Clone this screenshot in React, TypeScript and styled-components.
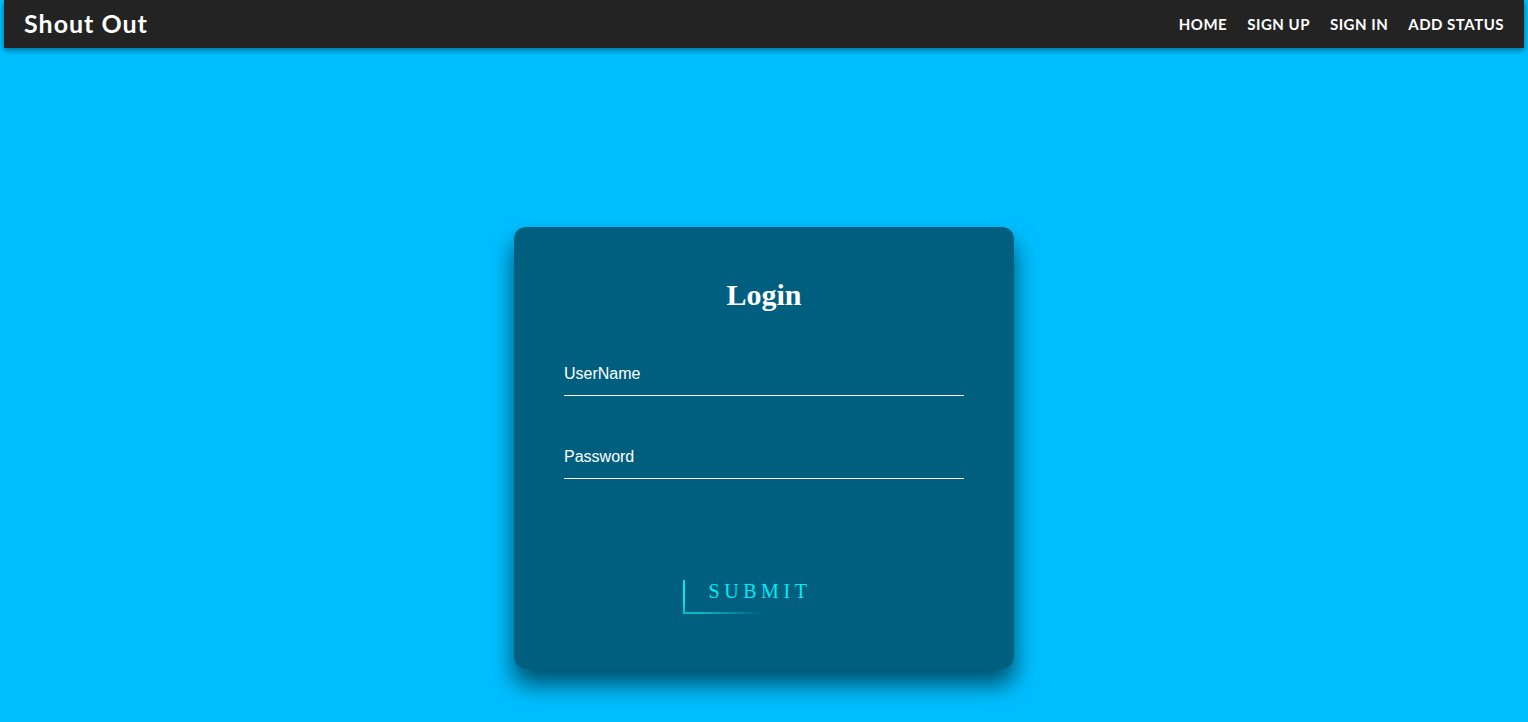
import React from "react";
import styled, { createGlobalStyle } from "styled-components";

const GlobalStyle = createGlobalStyle`
  html, body {
    margin: 0;
    padding: 0;
    background: #00bfff;
    min-height: 100%;
  }
`;

const App: React.FC = () => {
  return (
    <>
      <GlobalStyle />
      <Page>
        <NavBar>
          <Brand>Shout Out</Brand>
          <NavLinks>
            <NavLink href="#">Home</NavLink>
            <NavLink href="#">Sign Up</NavLink>
            <NavLink href="#">Sign In</NavLink>
            <NavLink href="#">Add Status</NavLink>
          </NavLinks>
        </NavBar>
        <Main>
          <LoginBox>
            <Title>Login</Title>
            <form onSubmit={(e) => e.preventDefault()}>
              <Field>
                <Input type="text" placeholder="UserName" />
              </Field>
              <Field>
                <Input type="password" placeholder="Password" />
              </Field>
              <ButtonRow>
                <SubmitButton type="submit">
                  <LeftLine />
                  <BottomLine />
                  Submit
                </SubmitButton>
              </ButtonRow>
            </form>
          </LoginBox>
        </Main>
      </Page>
    </>
  );
};

export default App;

const Page = styled.div`
  min-height: 722px;
  background: #00bfff;
  display: flex;
  flex-direction: column;
`;

const NavBar = styled.nav`
  margin: 0 4px;
  height: 48px;
  background: #232323;
  box-shadow: 0 2px 6px rgba(0, 0, 0, 0.45);
  display: flex;
  align-items: center;
  justify-content: space-between;
  padding: 0 20px;
  font-family: Lato, "Noto Sans", sans-serif;
  position: relative;
  z-index: 1;
`;

const Brand = styled.a`
  color: #ffffff;
  font-size: 25px;
  font-weight: 700;
  letter-spacing: 1px;
  padding-bottom: 3px;
`;

const NavLinks = styled.div`
  display: flex;
  gap: 20px;
`;

const NavLink = styled.a`
  color: #ffffff;
  text-decoration: none;
  text-transform: uppercase;
  font-size: 15px;
  font-weight: 700;
  letter-spacing: 0.5px;
`;

const Main = styled.main`
  display: flex;
  justify-content: center;
  padding-top: 179px;
`;

const LoginBox = styled.div`
  width: 500px;
  box-sizing: border-box;
  padding: 50px 50px 55px;
  background: rgba(0, 0, 0, 0.5);
  border-radius: 12px;
  box-shadow: 0 15px 25px rgba(0, 0, 0, 0.6);
`;

const Title = styled.h2`
  margin: 0 0 44px;
  text-align: center;
  color: #ffffff;
  font-family: "Liberation Serif", serif;
  font-size: 30px;
  font-weight: 700;
  line-height: 36px;
`;

const Field = styled.div`
  margin-bottom: 44px;
`;

const Input = styled.input`
  width: 100%;
  box-sizing: border-box;
  padding: 8px 0 12px;
  background: transparent;
  border: none;
  border-bottom: 1px solid #ffffff;
  outline: none;
  color: #ffffff;
  font-family: "Liberation Sans", Arial, sans-serif;
  font-size: 16px;
  line-height: 16px;

  &::placeholder {
    color: #ffffff;
    opacity: 1;
  }
`;

const ButtonRow = styled.div`
  display: flex;
  justify-content: center;
  padding-top: 57px;
`;

const SubmitButton = styled.button`
  position: relative;
  overflow: hidden;
  background: transparent;
  border: none;
  padding: 0 33px 12px 25px;
  color: #03e9f4;
  font-family: "Liberation Serif", serif;
  font-size: 20px;
  line-height: 22px;
  letter-spacing: 4.6px;
  text-transform: uppercase;
  cursor: pointer;
`;

const LeftLine = styled.span`
  position: absolute;
  left: 0;
  top: 0;
  width: 2px;
  height: 100%;
  background: linear-gradient(180deg, #03e9f4 60%, #0ab8cc);
`;

const BottomLine = styled.span`
  position: absolute;
  left: 0;
  bottom: 0;
  width: 100%;
  height: 2px;
  background: linear-gradient(90deg, #0ab8cc 10%, rgba(3, 233, 244, 0) 50%);
`;
